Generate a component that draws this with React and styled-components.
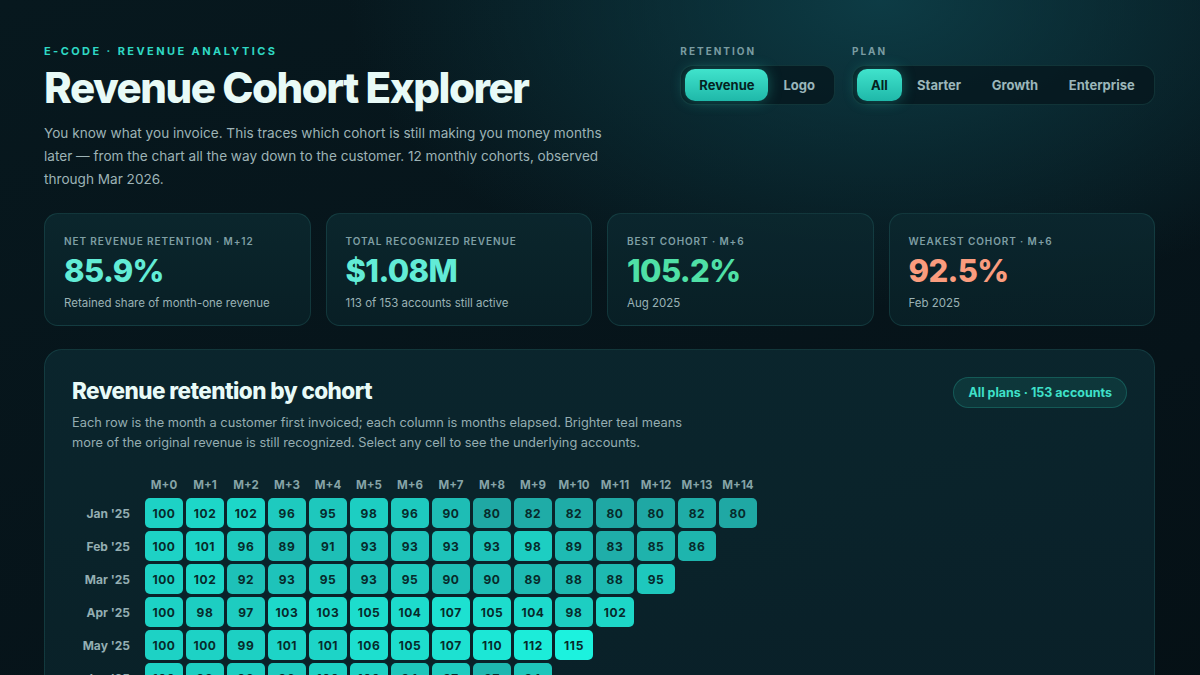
import React, { useState } from "react";
import styled, { createGlobalStyle } from "styled-components";

const GlobalStyle = createGlobalStyle`
  * { box-sizing: border-box; }
  html, body { margin: 0; padding: 0; }
  body {
    font-family: Inter, "Noto Sans", "Liberation Sans", sans-serif;
    background: #06141a;
    color: #e6f7f5;
    -webkit-font-smoothing: antialiased;
  }
`;

const Page = styled.div`
  min-height: 100vh;
  padding: 43px 45px 60px 44px;
  background:
    radial-gradient(ellipse 760px 440px at 880px 0px, rgba(14, 66, 76, 0.85), rgba(14, 66, 76, 0) 70%),
    linear-gradient(160deg, #07181e 0%, #061319 55%, #040e12 100%);
`;

const Header = styled.header`
  display: flex;
  justify-content: space-between;
  align-items: flex-start;
`;

const Intro = styled.div`
  max-width: 575px;
`;

const Eyebrow = styled.div`
  font-size: 11px;
  font-weight: 700;
  letter-spacing: 0.22em;
  color: #2fd9c4;
  text-transform: uppercase;
  line-height: 16px;
`;

const Title = styled.h1`
  margin: 4px 0 0;
  font-size: 42px;
  line-height: 50px;
  font-weight: 800;
  letter-spacing: -0.035em;
  color: #e8faf7;
`;

const Lead = styled.p`
  margin: 9px 0 0;
  font-size: 13.6px;
  line-height: 23px;
  color: #9db3b6;
`;

const Controls = styled.div`
  display: flex;
  gap: 17px;
`;

const ControlGroup = styled.div`
  display: flex;
  flex-direction: column;
  gap: 6px;
`;

const ControlLabel = styled.div`
  font-size: 10px;
  font-weight: 700;
  letter-spacing: 0.2em;
  line-height: 16px;
  color: #7a9ca1;
`;

const Segment = styled.div`
  display: flex;
  padding: 3px 4px;
  border-radius: 13px;
  background: rgba(6, 22, 28, 0.75);
  border: 1px solid rgba(94, 234, 212, 0.13);
`;

const SegButton = styled.button`
  height: 32px;
  padding: 0 ${({ $pad }) => $pad}px;
  border: none;
  border-radius: 10px;
  font-family: inherit;
  font-size: 13px;
  font-weight: 700;
  cursor: pointer;
  color: ${({ $active }) => ($active ? "#05221f" : "#9bb6ba")};
  background: ${({ $active }) =>
    $active ? "linear-gradient(180deg, #40e3cc 0%, #1fb8a9 100%)" : "transparent"};
  box-shadow: ${({ $active }) => ($active ? "0 0 14px rgba(45, 212, 191, 0.35)" : "none")};
`;

const Kpis = styled.section`
  display: grid;
  grid-template-columns: repeat(4, 1fr);
  gap: 15px;
  margin-top: 22px;
`;

const Card = styled.div`
  height: 113px;
  padding: 19px 19px 0;
  border-radius: 14px;
  background: linear-gradient(180deg, rgba(12, 40, 47, 0.9), rgba(9, 32, 39, 0.9));
  border: 1px solid rgba(94, 234, 212, 0.12);
`;

const CardLabel = styled.div`
  font-size: 10px;
  font-weight: 600;
  letter-spacing: 0.09em;
  line-height: 16px;
  color: #7f9fa4;
  text-transform: uppercase;
`;

const CardValue = styled.div`
  margin-top: 3px;
  font-size: 31px;
  font-weight: 800;
  letter-spacing: -0.02em;
  line-height: 38px;
  color: ${({ $tone }) =>
    $tone === "good" ? "#4fe0a6" : $tone === "bad" ? "#fa9c7e" : "#62ecd6"};
`;

const CardSub = styled.div`
  margin-top: 5px;
  font-size: 11.5px;
  line-height: 16px;
  color: #9ab2b5;
`;

const Panel = styled.section`
  margin-top: 23px;
  padding: 27px 27px 40px;
  border-radius: 18px;
  background: linear-gradient(180deg, rgba(11, 38, 46, 0.95), rgba(9, 31, 38, 0.95));
  border: 1px solid rgba(94, 234, 212, 0.12);
`;

const PanelHead = styled.div`
  display: flex;
  justify-content: space-between;
  align-items: flex-start;
`;

const PanelTitle = styled.h2`
  margin: 0;
  font-size: 22.5px;
  line-height: 28px;
  font-weight: 800;
  letter-spacing: -0.025em;
  color: #e8faf7;
`;

const PanelText = styled.p`
  margin: 8px 0 0;
  max-width: 630px;
  font-size: 12.8px;
  line-height: 20px;
  color: #95adb1;
`;

const Pill = styled.div`
  height: 31px;
  padding: 0 14px;
  display: flex;
  align-items: center;
  border-radius: 999px;
  font-size: 12.5px;
  font-weight: 700;
  color: #3fe0c9;
  background: rgba(45, 212, 191, 0.1);
  border: 1px solid rgba(45, 212, 191, 0.22);
`;

const Matrix = styled.div`
  margin-top: 22px;
  display: grid;
  grid-template-columns: 70px repeat(15, 38px);
  column-gap: 3px;
  row-gap: 3px;
`;

const ColHead = styled.div`
  height: 20px;
  display: flex;
  align-items: center;
  justify-content: center;
  font-size: 11.5px;
  font-weight: 700;
  color: #86a3a7;
  white-space: nowrap;
`;

const RowLabel = styled.div`
  height: 30px;
  padding-right: 12px;
  display: flex;
  align-items: center;
  justify-content: flex-end;
  font-size: 12px;
  font-weight: 700;
  color: #94aeb2;
  white-space: nowrap;
`;

const Cell = styled.button`
  height: 30px;
  padding: 0;
  border: none;
  border-radius: 5px;
  display: flex;
  align-items: center;
  justify-content: center;
  font-family: inherit;
  font-size: 12px;
  font-weight: 700;
  letter-spacing: 0.05em;
  color: #072a2b;
  cursor: pointer;
`;

const Empty = styled.div`
  height: 30px;
`;

const cohorts = [
  ["Jan '25", [100, 102, 102, 96, 95, 98, 96, 90, 80, 82, 82, 80, 80, 82, 80]],
  ["Feb '25", [100, 101, 96, 89, 91, 93, 93, 93, 93, 98, 89, 83, 85, 86]],
  ["Mar '25", [100, 102, 92, 93, 95, 93, 95, 90, 90, 89, 88, 88, 95]],
  ["Apr '25", [100, 98, 97, 103, 103, 105, 104, 107, 105, 104, 98, 102]],
  ["May '25", [100, 100, 99, 101, 101, 106, 105, 107, 110, 112, 115]],
  ["Jun '25", [100, 98, 98, 96, 100, 100, 94, 97, 87, 94]],
  ["Jul '25", [100, 99, 97, 98, 101, 100, 99, 96, 95]],
  ["Aug '25", [100, 103, 104, 102, 104, 106, 105, 103]],
  ["Sep '25", [100, 97, 95, 94, 96, 95, 94]],
  ["Oct '25", [100, 99, 98, 99, 97, 96]],
  ["Nov '25", [100, 101, 99, 100, 98]],
  ["Dec '25", [100, 98, 97, 96]],
];

const cellColor = (v) => {
  const t = Math.max(0, Math.min(1, (v - 80) / 35));
  const r = Math.round(31 - t * 3);
  const g = Math.round(168 + t * 74);
  const b = Math.round(164 + t * 58);
  return `rgb(${r}, ${g}, ${b})`;
};

function App() {
  const [mode, setMode] = useState("Revenue");
  const [plan, setPlan] = useState("All");

  return (
    <>
      <GlobalStyle />
      <Page>
        <Header>
          <Intro>
            <Eyebrow>E-code · Revenue analytics</Eyebrow>
            <Title>Revenue Cohort Explorer</Title>
            <Lead>
              You know what you invoice. This traces which cohort is still making you money months
              later — from the chart all the way down to the customer. 12 monthly cohorts, observed
              through Mar 2026.
            </Lead>
          </Intro>
          <Controls>
            <ControlGroup>
              <ControlLabel>RETENTION</ControlLabel>
              <Segment>
                {["Revenue", "Logo"].map((m) => (
                  <SegButton key={m} $active={mode === m} $pad={m === "Logo" ? 15 : 14} onClick={() => setMode(m)}>
                    {m}
                  </SegButton>
                ))}
              </Segment>
            </ControlGroup>
            <ControlGroup>
              <ControlLabel>PLAN</ControlLabel>
              <Segment>
                {["All", "Starter", "Growth", "Enterprise"].map((p) => (
                  <SegButton key={p} $active={plan === p} $pad={p === "All" ? 14 : 15.3} onClick={() => setPlan(p)}>
                    {p}
                  </SegButton>
                ))}
              </Segment>
            </ControlGroup>
          </Controls>
        </Header>

        <Kpis>
          <Card>
            <CardLabel>Net revenue retention · M+12</CardLabel>
            <CardValue>85.9%</CardValue>
            <CardSub>Retained share of month-one revenue</CardSub>
          </Card>
          <Card>
            <CardLabel>Total recognized revenue</CardLabel>
            <CardValue>$1.08M</CardValue>
            <CardSub>113 of 153 accounts still active</CardSub>
          </Card>
          <Card>
            <CardLabel>Best cohort · M+6</CardLabel>
            <CardValue $tone="good">105.2%</CardValue>
            <CardSub>Aug 2025</CardSub>
          </Card>
          <Card>
            <CardLabel>Weakest cohort · M+6</CardLabel>
            <CardValue $tone="bad">92.5%</CardValue>
            <CardSub>Feb 2025</CardSub>
          </Card>
        </Kpis>

        <Panel>
          <PanelHead>
            <div>
              <PanelTitle>Revenue retention by cohort</PanelTitle>
              <PanelText>
                Each row is the month a customer first invoiced; each column is months elapsed.
                Brighter teal means more of the original revenue is still recognized. Select any
                cell to see the underlying accounts.
              </PanelText>
            </div>
            <Pill>All plans · 153 accounts</Pill>
          </PanelHead>

          <Matrix>
            <div />
            {Array.from({ length: 15 }, (_, i) => (
              <ColHead key={i}>M+{i}</ColHead>
            ))}
            {cohorts.map(([label, values]) => (
              <React.Fragment key={label}>
                <RowLabel>{label}</RowLabel>
                {Array.from({ length: 15 }, (_, i) =>
                  i < values.length ? (
                    <Cell key={i} style={{ background: cellColor(values[i]) }}>
                      {values[i]}
                    </Cell>
                  ) : (
                    <Empty key={i} />
                  )
                )}
              </React.Fragment>
            ))}
          </Matrix>
        </Panel>
      </Page>
    </>
  );
}

export default App;
